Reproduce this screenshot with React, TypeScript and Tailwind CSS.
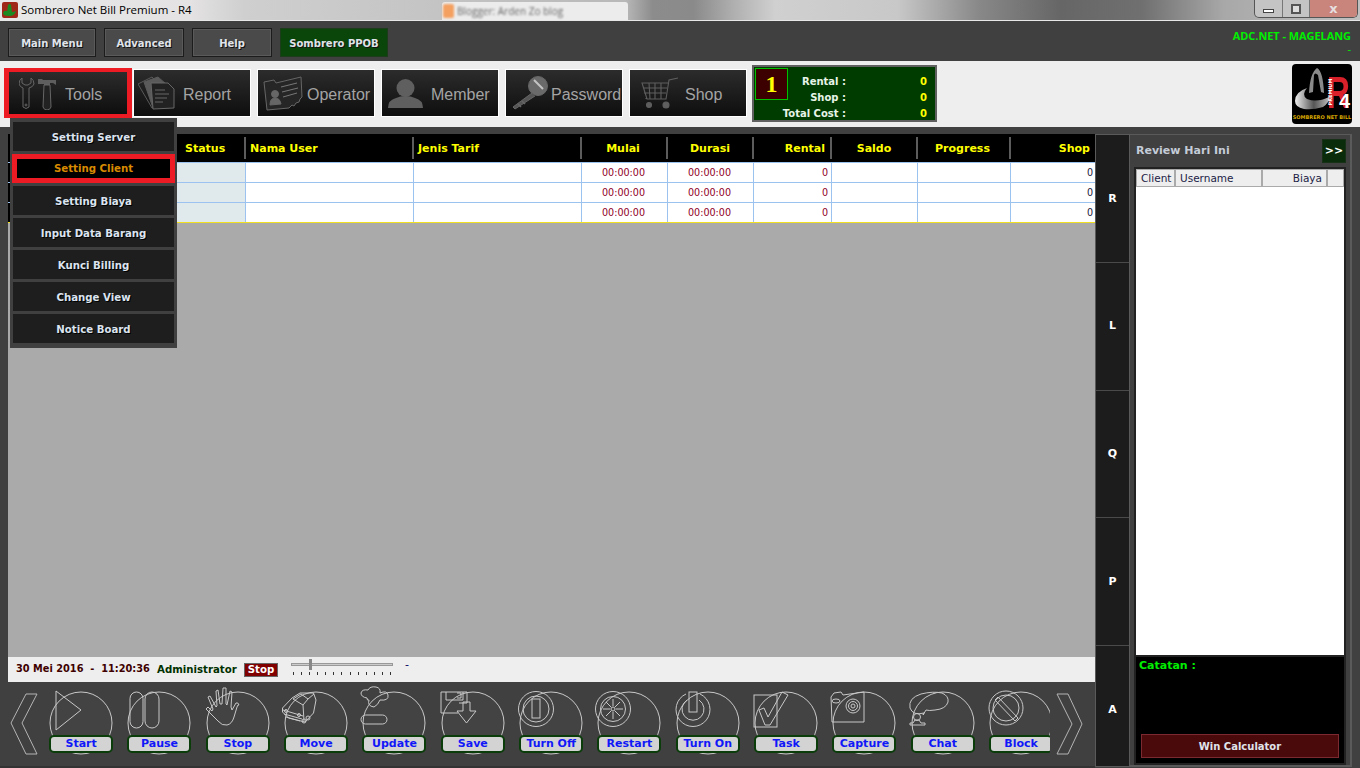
import type { ReactNode } from 'react'

const ui = "font-['DejaVu_Sans',sans-serif]"

function ToolsIcon() {
  return (
    <svg width="38" height="33" viewBox="0 0 38 33" fill="none" stroke="#666" strokeWidth="1">
      <path d="M3 1Q0 3 0 7q1 3 4 4v19q3 3 6 0V11q4-1 5-4 0-4-3-6v5L9 8H6L3 6z" />
      <circle cx="7" cy="28" r="1" />
      <path d="M19 2h4l1 1h13v5l-3-2h-3v2H25V7h-6z" fill="#5e5e5e" stroke="none" />
      <path d="M25 8h6l1 22q-1 3-4 3t-4-3z" fill="#222" />
    </svg>
  )
}

function ReportIcon() {
  return (
    <svg width="37" height="34" viewBox="0 0 37 34" fill="none" stroke="#5a5a5a" strokeWidth="1">
      <path d="M0 8 14 1l4 4 9 25-13 2z" />
      <path d="M6 6 20 1l8 7-4 22-9 2z" fill="#5a5a5a" />
      <path d="M13 7h17l6 6v19l-21 1z" fill="#222" stroke="#666" />
      <path d="M17 14h10M17 18h14M17 22h12M17 26h8" stroke="#666" />
    </svg>
  )
}

function OperatorIcon() {
  return (
    <svg width="40" height="35" viewBox="0 0 40 35" fill="#262626" stroke="#666" strokeWidth="1">
      <path d="M1 6l10-2 2 3L38 1l1 20-2 2-1 3-3 1-2 3-2-1-3 3-22 2z" />
      <circle cx="12" cy="18" r="3.500" fill="#666" />
      <path d="M7 29q0-7 5-7t6 6z" fill="#666" />
      <path d="M18 11l16-4M19 16l16-4M20 21l14-4" stroke="#777" />
    </svg>
  )
}

function MemberIcon() {
  return (
    <svg width="35" height="29" viewBox="0 0 35 29" fill="#5f5f5f">
      <ellipse cx="17.500" cy="9" rx="9" ry="9" />
      <path d="M0 29q0-8 8-10 4-2 9.500-2t9.500 2q8 2 8 10z" />
    </svg>
  )
}

function PasswordIcon() {
  return (
    <svg width="38" height="34" viewBox="0 0 38 34" fill="none" stroke="#666">
      <circle cx="26" cy="10" r="9.500" fill="#6a6a6a" strokeWidth="1" />
      <path d="M22 4l9 9" stroke="#c4c4c4" strokeWidth="2" />
      <path d="M20 17 1 31l2 2 20-13" fill="#555" strokeWidth="1" />
      <path d="M6 28l3 3M10 25l3 3" strokeWidth="1.500" />
    </svg>
  )
}

function ShopIcon() {
  return (
    <svg width="38" height="32" viewBox="0 0 38 32" fill="none" stroke="#5e5e5e" strokeWidth="1.100">
      <path d="M37 1l-9 2-3 19H6L1 6h26M2 11h24M3 16h22M5 22v-1M8 6l1 16M14 6v16M20 6v16" />
      <circle cx="8" cy="28" r="2.500" fill="#5e5e5e" />
      <circle cx="25" cy="28" r="3" fill="#5e5e5e" />
    </svg>
  )
}

const toolButtons: { label: string; icon: ReactNode; gap: string; ml: string }[] = [
  { label: 'Report', icon: <ReportIcon />, gap: 'gap-[8px]', ml: 'ml-[4px]' },
  { label: 'Operator', icon: <OperatorIcon />, gap: 'gap-[4px]', ml: 'ml-[5px]' },
  { label: 'Member', icon: <MemberIcon />, gap: 'gap-[8px]', ml: 'ml-[6px]' },
  { label: 'Password', icon: <PasswordIcon />, gap: 'gap-[1px]', ml: 'ml-[6px]' },
  { label: 'Shop', icon: <ShopIcon />, gap: 'gap-[6px]', ml: 'ml-[11px]' },
]

const dropdownItems = ['Setting Server', 'Setting Client', 'Setting Biaya', 'Input Data Barang', 'Kunci Billing', 'Change View', 'Notice Board']

const columns = 'grid-cols-[168px_70px_168px_168px_86px_86px_78px_86px_93px_84px]'

const headerCells = [
  { label: '', cls: '' },
  { label: 'Status', cls: 'pl-[9px]' },
  { label: 'Nama User', cls: 'pl-[4px]' },
  { label: 'Jenis Tarif', cls: 'pl-[4px]' },
  { label: 'Mulai', cls: 'text-center pr-[2px]' },
  { label: 'Durasi', cls: 'text-center' },
  { label: 'Rental', cls: 'text-right pr-[5px]' },
  { label: 'Saldo', cls: 'text-center' },
  { label: 'Progress', cls: 'text-center pr-[2px]' },
  { label: 'Shop', cls: 'text-right pr-[5px]' },
]

function TableRow() {
  const cell = 'border-r border-t border-[#9cc2f0] h-[20px] leading-[19px] text-[9.600px]'
  return (
    <div className={`grid ${columns} bg-white`}>
      <div className={`${cell} bg-black`} />
      <div className={`${cell} bg-[#e0eaed]`} />
      <div className={cell} />
      <div className={cell} />
      <div className={`${cell} pr-[2px] text-center text-[#900028]`}>00:00:00</div>
      <div className={`${cell} pr-[2px] text-center text-[#900028]`}>00:00:00</div>
      <div className={`${cell} text-right pr-[3px] text-[#900028]`}>0</div>
      <div className={cell} />
      <div className={cell} />
      <div className={`${cell} border-r-0 text-right pr-[2px] text-[#202040]`}>0</div>
    </div>
  )
}

const line = { fill: 'none', stroke: '#c8c8c8', strokeWidth: 1 }

const actions: { label: string; art: ReactNode }[] = [
  { label: 'Start', art: <path d="M14 7v39l25-20z" {...line} /> },
  {
    label: 'Pause',
    art: (
      <g {...line}>
        <rect x="10" y="8" width="13" height="36" rx="6.500" />
        <rect x="25" y="8" width="14" height="36" rx="7" />
      </g>
    ),
  },
  {
    label: 'Stop',
    art: (
      <path
        {...line}
        d="M9 27l10 10q4 5 9 4 5-1 7-8l3-10q1-3 2-2-1-3-3-2l-4 7-1-3 1-15-2-1-3 14-1-1 0-16-3 0-1 16-2 0-2-14-2 1 1 15-1 1-6-11-2 1 5 12-1 2-4-4-2 2z"
      />
    ),
  },
  {
    label: 'Move',
    art: (
      <g {...line}>
        <path d="M5.500 24 15 14l8-5h13.500L39 16l-2.500 13-8.500 9-16.500-4-6-6z" />
        <path d="M16 15l8-5 7 5-5 6zM31 15l6-5M26 21l1 16M6 26l20 6M7 30l18 5M9 33l14 4" />
        <circle cx="9" cy="27" r="1.500" />
        <circle cx="22" cy="31" r="1.500" />
        <circle cx="27" cy="37" r="2" />
        <circle cx="31" cy="34" r="2" />
      </g>
    ),
  },
  {
    label: 'Update',
    art: (
      <g {...line} transform="translate(-3 0)">
        <path d="M15 14q-6-1-6-5 1-4 7-3 2-4 8-3 5 1 4 6 7-3 8 2 1 6-8 5-2 5-6 7-7-1-5-7-2 1-2-2z" />
        <rect x="9" y="31" width="26" height="9" rx="4.500" />
      </g>
    ),
  },
  {
    label: 'Save',
    art: (
      <g {...line}>
        <path d="M7 8h26v11h-8M7 8v21h17" />
        <path d="M12 8v8h17V8M23 9h4v5h-4" />
        <path d="M29 18h7v9h6l-9.500 12L23 27h6z" />
      </g>
    ),
  },
  {
    label: 'Turn Off',
    art: (
      <g {...line}>
        <circle cx="24" cy="25" r="17.500" />
        <circle cx="24" cy="25" r="13" />
        <rect x="20" y="15" width="8" height="19" />
      </g>
    ),
  },
  {
    label: 'Restart',
    art: (
      <g {...line}>
        <circle cx="23" cy="25" r="17.500" />
        <circle cx="23" cy="25" r="12.500" />
        <circle cx="23" cy="25" r="2" />
        <path d="M23 15v7M23 28v7M13 25h7M26 25h7M16 18l5 5M25 27l5 5M30 18l-5 5M21 27l-5 5" />
      </g>
    ),
  },
  {
    label: 'Turn On',
    art: (
      <g {...line}>
        <path d="M17 10a17 17 0 1 0 14 0" />
        <path d="M18 16a11 11 0 1 0 12 0" />
        <rect x="20" y="8" width="8" height="20" />
      </g>
    ),
  },
  {
    label: 'Task',
    art: (
      <g {...line}>
        <rect x="7" y="11" width="23" height="32" />
        <path d="M12 26l5-2 4 9 14-25 6 3-18 30h-5z" />
      </g>
    ),
  },
  {
    label: 'Capture',
    art: (
      <g {...line} transform="translate(-3 -2)">
        <path d="M9 15l3-4 7-1 2 3 21-3v30H10z" />
        <ellipse cx="14" cy="19" rx="4" ry="2" />
        <circle cx="31" cy="24" r="7" />
        <circle cx="31" cy="24" r="4.500" />
        <circle cx="31" cy="24" r="2" />
      </g>
    ),
  },
  {
    label: 'Chat',
    art: (
      <g {...line}>
        <path d="M20 29q-11 3-14-5-2-10 11-14 12-3 21-1 7 3 6 9-2 7-13 8-6 1-9 0l-3 5z" />
        <circle cx="13" cy="33" r="3.500" />
        <path d="M6 41h15v-2h-4l-2-3h-4l-2 3h-3z" />
      </g>
    ),
  },
  {
    label: 'Block',
    art: (
      <g {...line}>
        <circle cx="24" cy="24" r="17" />
        <circle cx="24" cy="24" r="13" />
        <path d="M13 16l3-3 20 21-3 3z" />
      </g>
    ),
  },
]

function ActionButton({ label, art }: { label: string; art: ReactNode }) {
  return (
    <div className="flex w-[78.330px] shrink-0 flex-col items-center">
      <svg viewBox="0 0 78 64" className="h-[64px] w-[78px] overflow-visible">
        <circle cx="39" cy="39" r="31" fill="#484848" fillOpacity="0.4" stroke="#c8c8c8" strokeWidth="1" />
        {art}
      </svg>
      <div className="-mt-[13px] h-[18px] w-[64px] rounded-[5px] border-2 border-[#0b3d0b] bg-[#d3d3d3] text-center text-[11px] font-bold leading-[14px] text-[#1018f8]">
        {label}
      </div>
    </div>
  )
}

function Logo() {
  return (
    <div className="relative mr-[8px] h-[60px] w-[60px] overflow-hidden rounded-[4px] bg-black">
      <svg width="60" height="48" viewBox="0 0 60 48" className="absolute left-0 top-0">
        <defs>
          <linearGradient id="hat" x1="0" x2="1">
            <stop offset="0" stopColor="#f0f0f0" />
            <stop offset="0.55" stopColor="#555" />
            <stop offset="1" stopColor="#bbb" />
          </linearGradient>
        </defs>
        <path d="M17 29q1-20 8-25 6 3 7 25l-3-1-3-17q-3-3-4 0l-1 17z" fill="#8a8a8a" />
        <path d="M3 37q0-9 12-13-6 7 0 11 10 4 22-2 1 5-6 10-10 3-19 2-9-2-9-8z" fill="url(#hat)" />
      </svg>
      <div className="absolute left-[35px] top-[11px] origin-left scale-x-[0.72] font-['Liberation_Sans',sans-serif] text-[44px] font-bold leading-[36px] text-[#d8202a]">R</div>
      <div className="absolute left-[18px] top-[25px] w-[40px] -rotate-90 whitespace-nowrap text-center text-[5px] font-bold leading-[6px] text-white">PREMIUM</div>
      <div className="absolute left-[47px] top-[26px] font-['Liberation_Sans',sans-serif] text-[20px] font-bold leading-[22px] text-white">4</div>
      <div className="absolute left-0 right-0 top-[50px] whitespace-nowrap text-center text-[5px] font-bold leading-[7px] text-[#d8a800]">SOMBRERO NET BILL</div>
    </div>
  )
}

export default function App() {
  return (
    <div className={`${ui} relative flex h-[768px] w-[1360px] flex-col overflow-hidden bg-[#404040] text-[11px]`}>
      {/* title bar */}
      <div className="flex h-[21px] shrink-0 items-center border-b border-[#e8e8e8] bg-[linear-gradient(90deg,#e8e8e8_0%,#e4e2e2_14%,#cfcfcf_18%,#c4c4c4_32%,#b8b8b8_46%,#8c8c8c_48%,#8a8a8a_51%,#b0b0b0_54%,#d0d0d0_57%,#c8c8c8_66%,#888888_72%,#666666_78%,#707070_84%,#a8a8a8_90%,#c0c0c0_100%)]">
        <svg width="16" height="16" viewBox="0 0 16 16" className="ml-[2px] shrink-0">
          <rect width="16" height="16" rx="2" fill="#a02818" />
          <path d="M6 3q2-2 3 0l1 7H5z" fill="#1c8a20" />
          <path d="M1 11q1-3 4-2 5 2 9 0-1 5-7 5t-6-3z" fill="#1c8a20" />
        </svg>
        <span className="ml-[3px] w-[171px] shrink-0 whitespace-nowrap font-['Open_Sans',sans-serif] text-[11.500px] text-black">Sombrero Net Bill Premium - R4</span>
        <div className="ml-[250px] flex h-[18px] w-[186px] shrink-0 items-center self-end rounded-t-[3px] bg-[#ececec] pl-[1px]">
          <div className="h-[14px] w-[11px] rounded-[2px] bg-[#f4a060] blur-[1px]" />
          <span className="ml-[3px] font-['Open_Sans',sans-serif] text-[10px] text-[#666] blur-[1px]">Blogger: Arden Zo blog</span>
        </div>
        <div className="ml-auto mr-[2px] flex h-[18px] w-[104px] self-start overflow-hidden rounded-b-[5px] border border-t-0 border-[#555] bg-[#c4c4c4]">
          <div className="flex w-[28px] items-center justify-center border-r border-[#777]"><div className="mt-[4px] h-[4px] w-[11px] border border-[#444] bg-white" /></div>
          <div className="flex w-[27px] items-center justify-center border-r border-[#777]"><div className="h-[10px] w-[10px] border-2 border-[#555] bg-[#ddd]" /></div>
          <div className="flex flex-1 items-center justify-center bg-[#c9847c] text-[13px] font-bold leading-none text-[#e6dede]">x</div>
        </div>
      </div>

      {/* menu bar */}
      <div className="flex h-[40px] shrink-0 items-start bg-[#404040] pl-[8px] pt-[7px] text-[10px] font-bold text-[#e0e4ea]">
        <div className="flex gap-[8px]">
          <div className="flex h-[29px] w-[88px] items-center justify-center border border-[#1c1c1c] bg-[#4a4a4a] pt-[1px] outline outline-1 -outline-offset-2 outline-[#5a5a5a] [text-shadow:1px_1px_0_#111]">Main Menu</div>
          <div className="flex h-[29px] w-[80px] items-center justify-center border border-[#1c1c1c] bg-[#4a4a4a] pt-[1px] outline outline-1 -outline-offset-2 outline-[#5a5a5a] [text-shadow:1px_1px_0_#111]">Advanced</div>
          <div className="flex h-[29px] w-[80px] items-center justify-center border border-[#1c1c1c] bg-[#4a4a4a] pt-[1px] outline outline-1 -outline-offset-2 outline-[#5a5a5a] [text-shadow:1px_1px_0_#111]">Help</div>
          <div className="flex h-[29px] w-[108px] items-center justify-center border border-[#1c3c1c] bg-[#0a460a] pt-[1px] [text-shadow:1px_1px_0_#111]">Sombrero PPOB</div>
        </div>
        <div className="ml-auto mr-[9px] text-right font-['Open_Sans',sans-serif] text-[10.900px] leading-[15px] text-[#00f000]">
          <div>ADC.NET - MAGELANG</div>
          <div className="font-normal leading-[12px]">-</div>
        </div>
      </div>

      {/* toolbar */}
      <div className="flex h-[66px] shrink-0 items-center bg-[#eeeeee] font-['Liberation_Sans',sans-serif] text-[16px] text-[#a4a4a4]">
        <div className="mb-[2px] ml-[4px] flex h-[50px] w-[128px] items-center border-x-[5px] border-y-4 border-[#ed1c24] bg-[linear-gradient(#2c2c2c,#0e0e0e)] pl-[10px]">
          <ToolsIcon />
          <span className="ml-[8px] pt-[3px]">Tools</span>
        </div>
        <div className="mb-[2px] ml-[2px] flex gap-[8px]">
          {toolButtons.map((b) => (
            <div key={b.label} className="flex h-[46px] w-[116px] items-center overflow-hidden bg-[linear-gradient(#2c2c2c,#0e0e0e)] outline outline-1 outline-white">
              <div className={`${b.ml} flex ${b.gap} items-center`}>
                {b.icon}
                <span className="pt-[3px]">{b.label}</span>
              </div>
            </div>
          ))}
        </div>
        <div className={`${ui} mb-[1px] ml-[6px] flex h-[57px] w-[185px] border-2 border-[#606060] bg-[#003c00] p-[1px]`}>
          <div className="flex h-[32px] w-[33px] items-center justify-center border border-[#00c000] bg-[#3c0000] font-['Liberation_Serif',serif] text-[24px] font-bold text-[#ffff00]">1</div>
          <div className="flex-1 pr-[7px] pt-[6px] text-[10px] font-bold leading-[16px] text-[#e8f4e8]">
            {[
              ['Rental :', '0'],
              ['Shop :', '0'],
              ['Total Cost :', '0'],
            ].map(([k, v]) => (
              <div key={k} className="flex">
                <span className="flex w-[58px] justify-end whitespace-nowrap">{k}</span>
                <span className="flex-1 text-right text-[#ffff00]">{v}</span>
              </div>
            ))}
          </div>
        </div>
        <div className={`${ui} ml-auto`}>
          <Logo />
        </div>
      </div>

      {/* main */}
      <div className="flex min-h-0 flex-1">
        <div className="flex w-[1095px] shrink-0 flex-col">
          <div className="flex flex-1 flex-col pl-[8px] pt-[7px]">
            <div className={`grid ${columns} h-[28px] shrink-0 items-center bg-black text-[11px] font-bold text-[#ffff00]`}>
              {headerCells.map((h, i) => (
                <div key={i} className={`h-[22px] border-r-2 border-[#5c5c5c] leading-[23px] last:border-r-0 first:border-r-0 ${h.cls}`}>
                  {h.label}
                </div>
              ))}
            </div>
            <div className="shrink-0">
              <TableRow />
              <TableRow />
              <TableRow />
            </div>
            <div className="h-[1px] shrink-0 bg-[#f0e020]" />
            <div className="flex-1 bg-[#aaaaaa]" />
            <div className="flex h-[25px] shrink-0 items-center bg-[#eeeeee] pl-[8px] font-bold">
              <span className="w-[133px] whitespace-pre text-[9.800px] text-[#400000]">30 Mei 2016  -  11:20:36</span>
              <span className="ml-[8px] w-[87px] text-[10.200px] text-[#003000]">Administrator</span>
              <span className="flex h-[14px] w-[34px] items-center justify-center border border-[#666] bg-[#800000] text-[10.200px] text-white">Stop</span>
              <div className="mb-[1px] ml-[13px] flex w-[102px] flex-col">
                <div className="relative h-[3px] w-full border border-[#999] bg-[#ccc]">
                  <div className="absolute left-[17px] top-[-5px] h-[11px] w-[3px] bg-[#888]" />
                </div>
                <div className="mt-[6px] flex justify-between px-[2px]">
                  {Array.from({ length: 13 }).map((_, i) => (
                    <div key={i} className="h-[3px] w-[1px] bg-[#333]" />
                  ))}
                </div>
              </div>
              <span className="mb-[8px] ml-[12px] font-normal text-[#000060]">-</span>
            </div>
          </div>
          {/* action bar */}
          <div className="flex h-[86px] shrink-0 items-start border-b-2 border-[#333] pl-[8px] pt-[9px]">
            <svg width="30" height="62" viewBox="0 0 30 62" className="mr-[4px] mt-[2px] shrink-0">
              <path d="M29 1H18L3 30l15 31h11L14 30z" fill="none" stroke="#b4b4b4" />
            </svg>
            <div className="-mt-[7px] flex w-[1008px] shrink-0 overflow-hidden pb-[2px]">
              {actions.map((a) => (
                <ActionButton key={a.label} label={a.label} art={a.art} />
              ))}
            </div>
            <svg width="28" height="62" viewBox="0 0 28 62" className="ml-[6px] mt-[2px] shrink-0">
              <path d="M1 1h11l14 30-14 30H1l15-30z" fill="none" stroke="#b4b4b4" />
            </svg>
          </div>
        </div>

        {/* right side */}
        <div className="flex flex-1 pb-[1px] pt-[7px]">
          <div className="flex w-[35px] shrink-0 flex-col border border-[#5a5a5a] bg-[#1c1c1c] text-[11px] font-bold text-white">
            {['R', 'L', 'Q', 'P', 'A'].map((c) => (
              <div key={c} className="flex h-[128px] items-center justify-center border-b border-[#4a4a4a] pt-[1px] last:h-[120px] last:border-b-0 last:pt-[8px]">{c}</div>
            ))}
          </div>
          <div className="flex w-[222px] shrink-0 flex-col border-b-2 border-r-2 border-t border-[#5a5a5a] pl-[4px] pr-[4px]">
            <div className="flex h-[32px] shrink-0 items-center justify-between pl-[2px] text-[#c4ccd8]">
              <span className="text-[11px] font-bold">Review Hari Ini</span>
              <div className="flex h-[24px] w-[24px] items-center justify-center border border-[#183018] bg-[#0a2c0a] text-[11px] font-bold text-white">&gt;&gt;</div>
            </div>
            <div className="flex min-h-0 flex-1 flex-col border-2 border-[#222] bg-[#222]">
              <div className="flex h-[18px] shrink-0 bg-[#ececec] text-[10.500px] leading-[16px] text-[#222246]">
                <div className="w-[39px] border border-[#aaa] bg-[#eee] pl-[4px]">Client</div>
                <div className="w-[87px] border border-[#aaa] bg-[#eee] pl-[4px]">Username</div>
                <div className="w-[65px] border border-[#aaa] bg-[#eee] pr-[4px] text-right">Biaya</div>
                <div className="flex-1 border border-[#aaa] bg-[#eee]" />
              </div>
              <div className="flex-1 bg-white" />
              <div className="mt-[2px] flex h-[106px] shrink-0 flex-col bg-black px-[3px] pb-[5px] pt-[1px]">
                <div className="text-[11px] font-bold text-[#00ee00]">Catatan :</div>
                <div className="mx-[2px] mt-auto flex h-[24px] items-center justify-center border border-[#7a2a30] bg-[#4a0a0c] text-[10px] font-bold text-[#e0e4ea]">Win Calculator</div>
              </div>
            </div>
          </div>
        </div>
      </div>

      {/* tools dropdown */}
      <div className="absolute left-[10px] top-[118px] flex h-[230px] w-[167px] flex-col gap-[3px] bg-[#404040] px-[3px] pt-[4px] text-[10.200px] font-bold">
        {dropdownItems.map((item) =>
          item === 'Setting Client' ? (
            <div key={item} className="-mx-[1px] flex h-[29px] items-center justify-center border-[5px] border-[#ed1c24] bg-black pt-[1px] text-[#d88a00]">{item}</div>
          ) : (
            <div key={item} className="flex h-[29px] items-center justify-center bg-[#1e1e1e] pt-[2px] text-[#dce4f0] [text-shadow:1px_1px_0_#000]">{item}</div>
          ),
        )}
      </div>
    </div>
  )
}
